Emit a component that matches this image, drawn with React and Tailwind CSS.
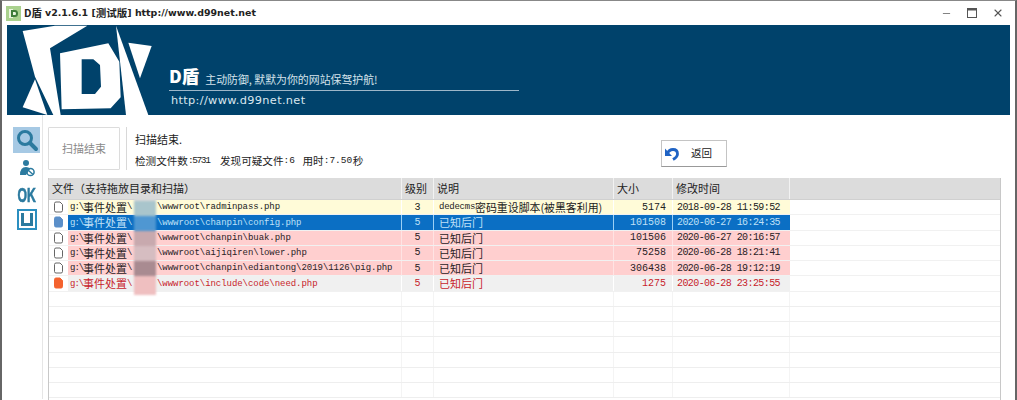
import { Minus, X } from "lucide-react";

const cjk = { fontFamily: '"Noto Sans CJK SC", sans-serif' };

const columns = [
  { label: "文件（支持拖放目录和扫描）", width: "w-[353px]" },
  { label: "级别", width: "w-[32px]" },
  { label: "说明", width: "w-[180px]" },
  { label: "大小", width: "w-[59px]" },
  { label: "修改时间", width: "w-[117px]" },
];

const rows = [
  { path: "\\wwwroot\\radminpass.php", level: 3, note: "dedecms|密码重设脚本(被黑客利用)", size: 5174, time: "2018-09-28 11:59:52", kind: "warn" },
  { path: "\\wwwroot\\chanpin\\config.php", level: 5, note: "已知后门", size: 101508, time: "2020-06-27 16:24:35", kind: "selected" },
  { path: "\\wwwroot\\chanpin\\buak.php", level: 5, note: "已知后门", size: 101506, time: "2020-06-27 20:16:57", kind: "danger" },
  { path: "\\wwwroot\\aijiqiren\\lower.php", level: 5, note: "已知后门", size: 75258, time: "2020-06-28 18:21:41", kind: "danger" },
  { path: "\\wwwroot\\chanpin\\ediantong\\2019\\1126\\pig.php", level: 5, note: "已知后门", size: 306438, time: "2020-06-28 19:12:19", kind: "danger" },
  { path: "\\wwwroot\\include\\code\\need.php", level: 5, note: "已知后门", size: 1275, time: "2020-06-28 23:25:55", kind: "active" },
];

const rowStyles = {
  warn: "bg-[#fffbd8] text-[#222]",
  selected: "bg-[#0b6fc4] text-[#bfe0f7]",
  danger: "bg-[#ffcfcf] text-[#2a2226]",
  active: "bg-[#f0f0f0] text-[#c8242c]",
};

const iconFill = {
  warn: "#ffffff",
  selected: "#5b8fc9",
  danger: "#ffffff",
  active: "#f4622e",
};

const cellLine = {
  warn: "border-[#fff]",
  selected: "border-[#9cd0f5]",
  danger: "border-[#ffe3e3]",
  active: "border-[#fff]",
};

function FileIcon({ kind }) {
  const filled = kind === "selected" || kind === "active";
  return (
    <svg width="11" height="12" viewBox="0 0 11 12" className="ml-[4px] shrink-0">
      <path
        d="M1.5 2.5 Q1.5 1 3 1 H7 L9.5 3.5 V9.5 Q9.5 11 8 11 H3 Q1.5 11 1.5 9.5 Z"
        fill={iconFill[kind]}
        stroke={filled ? iconFill[kind] : "#666"}
        strokeWidth="1"
      />
    </svg>
  );
}

function Note({ text }) {
  if (text.includes("|")) {
    const [latin, rest] = text.split("|");
    return (
      <span className="flex items-center pt-[1px]">
        <span className="pt-[1px] font-['Liberation_Mono'] text-[9px] tracking-[-0.25px]">{latin}</span>
        <span className="text-[10.9px] leading-none" style={cjk}>{rest}</span>
      </span>
    );
  }
  return <span className="pt-[1px] text-[11px] leading-none" style={cjk}>{text}</span>;
}

function ResultRow({ row }) {
  const line = cellLine[row.kind];
  return (
    <div className="flex h-[15.25px] items-center overflow-hidden border-b border-[#f1f1f1] bg-white">
      <div className="flex h-full w-[19px] shrink-0 items-center">
        <FileIcon kind={row.kind} />
      </div>
      <div className={`flex h-full items-center ${rowStyles[row.kind]}`}>
        <div className={`flex h-full w-[334px] items-center border-r pl-[2px] font-['Liberation_Mono'] text-[9px] ${line}`}>
          <span className="flex w-[64px] shrink-0 items-center">
            <span className="w-[13px] shrink-0 pt-[2px] tracking-[-1px]">g:\</span>
            <span className="pt-[1px] text-[11px] leading-none" style={cjk}>事件处置</span>
            <span className="pt-[2px]">\</span>
          </span>
          <span className="w-[23px] shrink-0" />
          <span className="whitespace-nowrap pt-[2px] tracking-[-0.05px]">{row.path}</span>
        </div>
        <div className={`flex h-full w-[32px] items-center justify-center border-r font-['Liberation_Mono'] text-[10px] ${line}`}>
          {row.level}
        </div>
        <div className={`flex h-full w-[180px] items-center border-r pl-[5px] ${line}`}>
          <Note text={row.note} />
        </div>
        <div className={`flex h-full w-[59px] items-center justify-end border-r pr-[6px] font-['Liberation_Mono'] text-[10px] ${line}`}>
          {row.size}
        </div>
        <div className="flex h-full w-[117px] items-center whitespace-nowrap pl-[4px] font-['Liberation_Mono'] text-[10px] tracking-[-0.58px]">
          {row.time}
        </div>
      </div>
    </div>
  );
}

function EmptyRow() {
  return (
    <div className="flex h-[15.25px] border-b border-[#eeeeee] bg-white">
      <div className="h-full w-[353px] border-r border-[#f4f4f4]" />
      <div className="h-full w-[32px] border-r border-[#f4f4f4]" />
      <div className="h-full w-[180px] border-r border-[#f4f4f4]" />
      <div className="h-full w-[59px] border-r border-[#f4f4f4]" />
      <div className="h-full w-[117px] border-r border-[#f4f4f4]" />
    </div>
  );
}

function Logo() {
  return (
    <svg width="163" height="90" viewBox="21 15 489 270" className="shrink-0">
      <path fill="#fff" d="M68 33 L165 17 H262 L150 85 L182 285 H160 L105 170 Z" />
      <path fill="#fff" d="M105 178 L68 262 L142 285 Z" />
      <path fill="#fff" fillRule="evenodd" d="M180 100 L325 70 L358 125 L362 232 L332 265 L185 268 Z M245 118 V222 H285 L303 200 L300 135 L280 118 Z" />
      <path fill="#fff" d="M348 17 L445 285 H378 Z" />
      <path fill="#fff" d="M385 68 L455 78 L420 175 Z" />
    </svg>
  );
}

export default function App() {
  return (
    <div className="h-[400px] w-[1017px] overflow-hidden border-x-2 border-t border-x-[#666] border-t-[#888] bg-white text-[#222]">
      {/* title bar */}
      <div className="flex h-[24px] items-center pl-[4px]">
        <svg width="15" height="15" viewBox="0 0 15 15" className="shrink-0">
          <rect width="15" height="15" fill="#a9d18e" />
          <path d="M3 3 L7 3 L7 12 L3 12 Z" fill="#eaf5e0" />
          <path d="M5 4 H9 Q12 4 12 7.5 Q12 11 9 11 H5 Z" fill="#3f7d3a" />
          <path d="M7 6 H9 Q10 6 10 7.5 Q10 9 9 9 H7 Z" fill="#eaf5e0" />
        </svg>
        <span className="ml-[3px] flex items-center whitespace-nowrap font-['DejaVu_Sans'] text-[9.45px] font-bold">
          <span className="text-[10.5px]" style={cjk}>D盾</span>
          <span className="ml-[3px]">v2.1.6.1 [</span>
          <span className="text-[10.5px]" style={cjk}>测试版</span>
          <span>] http://www.d99net.net</span>
        </span>
        <div className="ml-auto flex items-center pr-[11px] text-[#555]">
          <Minus size={11} strokeWidth={1.6} />
          <svg width="10" height="10" viewBox="0 0 10 10" className="ml-[15px]" fill="none" stroke="#555">
            <rect x="0.5" y="0.5" width="9" height="9" />
            <path d="M0 1.5 H10" strokeWidth="2" />
          </svg>
          <X size={12} strokeWidth={2.2} className="ml-[15px]" />
        </div>
      </div>

      {/* banner */}
      <div className="mx-[5px] flex h-[90px] bg-[#00426b]">
        <Logo />
        <div className="-ml-[1px] flex w-[350px] shrink-0 flex-col pt-[38px]">
          <div className="flex h-[28px] items-end border-b border-[#9db7c9] pb-[3px]">
            <span className="text-[17.5px] font-black leading-[22px] text-white" style={cjk}>D盾</span>
            <span className="mb-[1px] ml-[6px] text-[10.9px] leading-[14px] text-[#d5e3ec]" style={cjk}>主动防御, 默默为你的网站保驾护航!</span>
          </div>
          <span className="mt-[3px] pl-[2px] font-['DejaVu_Sans'] text-[11.3px] leading-[14px] tracking-[0.35px] text-[#dbe7ef]">http://www.d99net.net</span>
        </div>
      </div>

      {/* body */}
      <div className="flex h-[284px]">
        <div className="flex w-[41px] shrink-0 flex-col items-center border-r border-[#e6e6e6] pl-[9px] pt-[12px]">
          <div className="flex h-[26px] w-[27px] items-center justify-center bg-[#a6c9e4]">
            <svg width="24" height="24" viewBox="0 0 24 24" fill="none" stroke="#2b7a9f">
              <circle cx="10" cy="10" r="6.5" strokeWidth="3" />
              <path d="M15 15 L21 21" strokeWidth="4" strokeLinecap="round" />
            </svg>
          </div>
          <svg width="18" height="18" viewBox="0 0 18 18" className="mt-[6px]">
            <circle cx="8" cy="4" r="3" fill="#2b7a9f" />
            <path d="M2 16 Q2 8 8 8 Q11 8 12 10 L8 16 Z" fill="#2b7a9f" />
            <circle cx="12.5" cy="13" r="3.6" fill="none" stroke="#2b7a9f" strokeWidth="1.5" />
            <path d="M10 11 L15 15.5" stroke="#2b7a9f" strokeWidth="1.4" />
          </svg>
          <span className="mt-[6px] h-[24px] origin-center scale-x-[0.58] font-['Liberation_Sans'] text-[21px] font-bold leading-[24px] text-[#2b7a9f] [-webkit-text-stroke:0.7px_#2b7a9f]">
            OK
          </span>
          <div className="mt-[2px] flex h-[21px] w-[20px] shrink-0 items-center justify-center border-2 border-[#2b8fc0]">
            <div className="h-[13px] w-[12px] border-x-[3px] border-b-[3px] border-[#2b7a9f]" />
          </div>
        </div>

        <div className="min-w-0 flex-1 pl-[5px] pt-[12px]">
          <div className="flex h-[51px]">
            <div className="flex h-[43px] w-[72px] shrink-0 items-center justify-center rounded-[1px] border border-[#dcdcdc] text-[11px] text-[#8a8a8a]" style={cjk}>
              扫描结束
            </div>
            <div className="ml-[6px] h-[43px] w-px bg-[#d8d8d8]" />
            <div className="ml-[8px] flex w-[526px] shrink-0 flex-col">
              <span className="mt-[5px] text-[11px] leading-[14px]" style={cjk}>扫描结束.</span>
              <span className="mt-[7px] flex items-center whitespace-nowrap text-[10.6px] leading-[14px]" style={cjk}>
                检测文件数
                <span className="w-[22px] pt-[1px] font-['Liberation_Mono'] text-[9.5px] tracking-[-1.4px]">:5731</span>
                <span className="ml-[10px]">发现可疑文件</span>
                <span className="w-[13px] pt-[1px] font-['Liberation_Mono'] text-[9.5px]">:6</span>
                <span className="ml-[6px]">用时</span>
                <span className="w-[29px] pt-[1px] font-['Liberation_Mono'] text-[9.5px]">:7.50</span>
                秒
              </span>
            </div>
            <button className="mt-[13px] flex h-[27px] w-[66px] shrink-0 items-center border border-[#c4c4c4] border-b-[#999] bg-white pl-[2px]">
              <svg width="16" height="14" viewBox="0 0 16 14" fill="none" stroke="#1f63c4" strokeWidth="2.8">
                <path d="M3 7 Q5 2.5 9 2.5 Q13.5 2.5 13.5 7 Q13.5 10 9 12.5" />
                <path d="M1 1.5 V9 H8 Z" fill="#1f63c4" stroke="none" />
              </svg>
              <span className="ml-[11px] text-[10.5px] leading-none" style={cjk}>返回</span>
            </button>
          </div>

          <div className="relative h-[240px] w-[953px] overflow-hidden border-x border-x-[#c8c8c8]">
            <div className="flex h-[22px] border-b border-[#d0d0d0] bg-[#dcdcdc]">
              {columns.map((col) => (
                <div key={col.label} className={`flex h-full items-center border-r border-[#f2f2f2] pl-[3px] text-[11px] text-[#222] ${col.width}`} style={cjk}>
                  {col.label}
                </div>
              ))}
            </div>
            {rows.map((row) => (
              <ResultRow key={row.path} row={row} />
            ))}
            {[0, 1, 2, 3, 4, 5, 6].map((i) => (
              <EmptyRow key={i} />
            ))}
            {/* pixelated patch over the folder name */}
            <div className="absolute left-[85px] top-[19px] flex h-[98px] w-[22px] flex-col blur-[1px]">
              <div className="h-[4px] bg-[#d9d9d9]" />
              <div className="h-[15px] bg-[#a9c5cc]" />
              <div className="h-[15px] bg-[#4f97d2]" />
              <div className="h-[15px] bg-[#c8a9ae]" />
              <div className="h-[15px] bg-[#d6bdc1]" />
              <div className="h-[15px] bg-[#a98b91]" />
              <div className="h-[19px] bg-[#efbfc0]" />
            </div>
          </div>
        </div>
      </div>
    </div>
  );
}
